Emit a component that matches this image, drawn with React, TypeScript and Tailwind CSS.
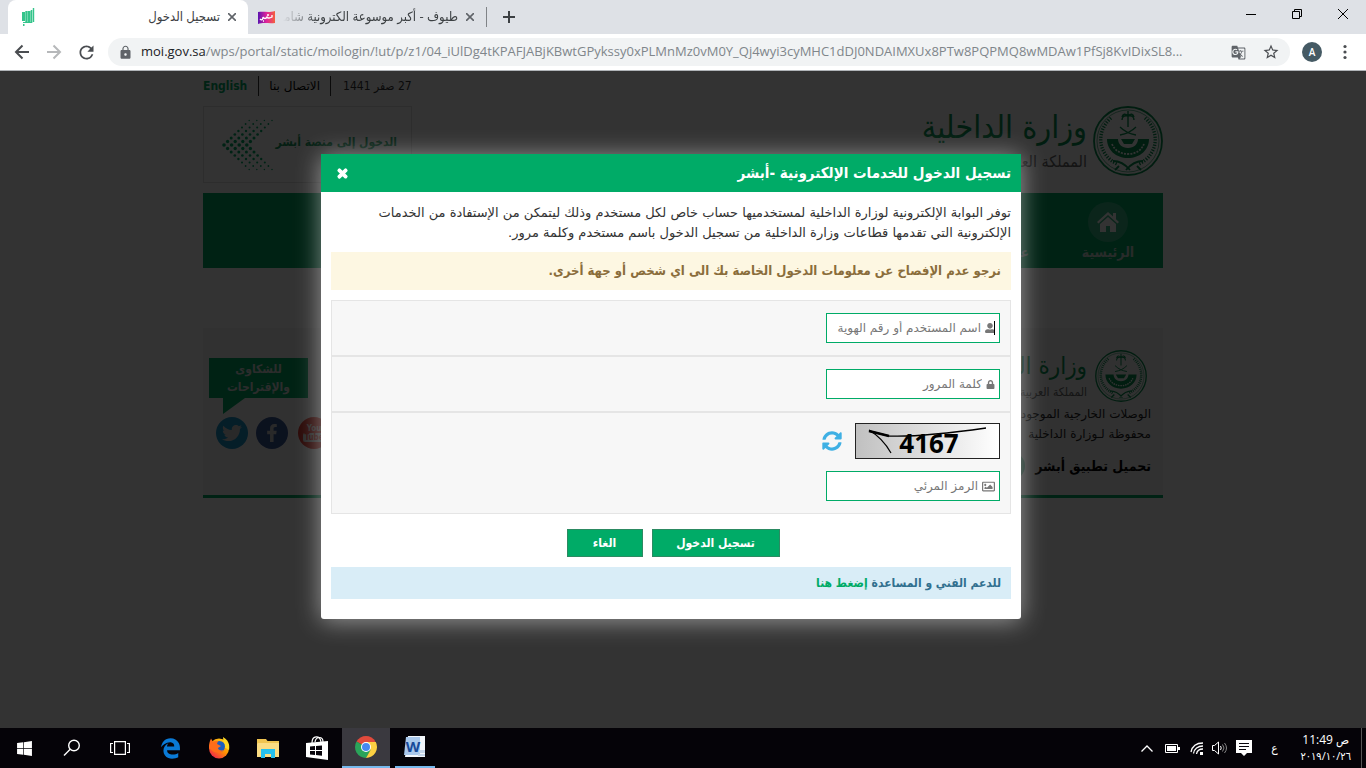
import React from 'react';
import {
  FaEdgeLegacy,
  FaFacebookF,
  FaLock,
  FaRegImage,
  FaSyncAlt,
  FaTimes,
  FaTwitter,
  FaUserAlt,
  FaWindows,
} from 'react-icons/fa';
import { MdGTranslate, MdLock, MdRefresh, MdStarBorder } from 'react-icons/md';

const dotRows = [-7, -6, -5, -4, -3, -2, -1, 0, 1, 2, 3, 4, 5, 6, 7];

// Dotted arrow next to the Absher link
const DottedArrow: React.FC = () => (
  <svg width="54" height="52" viewBox="0 0 54 52" className="shrink-0" aria-hidden="true">
    {dotRows.map((row) =>
      [0, 1, 2, 3].map((col) => (
        <circle
          key={`${row}-${col}`}
          cx={3 + Math.abs(row) * 3.6 + col * 7.6}
          cy={26 + row * 3.5}
          r={1.8 - Math.abs(row) * 0.15}
          fill="#00ab67"
        />
      )),
    )}
  </svg>
);

// Ministry emblem: ring, palm over crossed swords, banner and wreath
const Emblem: React.FC<{ className: string }> = ({ className }) => (
  <svg className={className} viewBox="0 0 70 70" fill="none" stroke="#088f50" aria-hidden="true">
    <circle cx="35" cy="35" r="34" strokeWidth="1.8" />
    <circle cx="35" cy="35" r="31" strokeWidth="0.6" />
    <path d="M35 21V9M35 10c-3-3-5-2-6 1M35 10c3-3 5-2 6 1M35 10c-4-1-6 1-6 4M35 10c4-1 6 1 6 4M35 9v-4" strokeWidth="1.4" />
    <path d="M27 29c6-1 11-3 16-8M43 29c-6-1-11-3-16-8" strokeWidth="1.3" />
    <path d="M14 33h11c0 5 4 9 10 9s10-4 10-9h11c0 11-9 19-21 19S14 44 14 33z" fill="#088f50" stroke="none" />
    <path d="M28 33h14l-3 5h-8z" fill="#088f50" stroke="none" />
    <path d="M19 38c3 7 9 10 16 10s13-3 16-10" stroke="#fff" strokeWidth="1.8" strokeDasharray="2 1.2" />
    <path d="M18 12C3 25 4 48 24 58M52 12c15 13 14 36-6 46" strokeWidth="3.4" strokeDasharray="1.2 1.5" />
    <path d="M20 55c6 0 12 3 17 9M50 55c-6 0-12 3-17 9M26 60l-4 4M44 60l4 4" strokeWidth="1.8" />
  </svg>
);

const BrowserChrome: React.FC = () => (
  <header className="bg-[#dee1e6] font-['Open_Sans','DejaVu_Sans_Condensed',sans-serif]">
    <div className="flex h-[34px] items-stretch pl-2">
      <div className="flex w-[240px] items-center rounded-t-lg bg-white pr-2.5 pl-3.5">
        <svg width="13" height="18" viewBox="0 0 13 18" fill="#35c48b" aria-hidden="true">
          <path d="M0 4h3v9H0zM3.300 3h2.400v11H3.300zM6 3h2.400v11H6zM8.700 2h1.600v13H8.700zM10.800 0h1.400v14h-1.400zM1 14h8v1H1zM1 16h1.500v2H1z" />
        </svg>
        <span dir="rtl" className="flex-1 text-[13px] text-[#3c4043]">
          تسجيل الدخول
        </span>
        <button aria-label="Close tab" className="ml-1.5 flex w-3 justify-center">
          <svg width="8" height="8" viewBox="0 0 8 8" stroke="#5f6368" strokeWidth="1.600">
            <path d="M0 0l8 8M8 0L0 8" />
          </svg>
        </button>
      </div>
      <div className="flex w-[238px] items-center pr-2.5 pl-2.5">
        <svg width="17" height="13" viewBox="0 0 17 13" aria-hidden="true">
          <defs>
            <linearGradient id="tayouf" x1="0" x2="1">
              <stop offset="0" stopColor="#5a12b0" />
              <stop offset="0.500" stopColor="#e0249a" />
              <stop offset="1" stopColor="#f4603c" />
            </linearGradient>
          </defs>
          <path d="M0 1c6-1 10 1 17-1v12c-6 1-11-1-17 1z" fill="url(#tayouf)" />
          <path d="M2 8c2 2 3 0 3-2 1 2 3 2 4 0 1 2 3 1 5 0V4M5 10h1M9 4h2" fill="none" stroke="#fff" strokeWidth="1.300" />
        </svg>
        <span
          dir="rtl"
          className="ml-2 flex-1 overflow-hidden mask-l-from-80% text-[13px] whitespace-nowrap text-[#3c4043]"
        >
          طيوف - أكبر موسوعة الكترونية شاملة
        </span>
        <button aria-label="Close tab" className="ml-1.5 flex w-3 justify-center">
          <svg width="8" height="8" viewBox="0 0 8 8" stroke="#5f6368" strokeWidth="1.600">
            <path d="M0 0l8 8M8 0L0 8" />
          </svg>
        </button>
      </div>
      <div className="my-auto h-5 w-px bg-[#808387]" />
      <button aria-label="New tab" className="ml-4 flex items-center">
        <svg width="12" height="12" viewBox="0 0 12 12" stroke="#3c4043" strokeWidth="2">
          <path d="M6 0v12M0 6h12" />
        </svg>
      </button>
      <div className="ml-auto flex items-start pt-2">
        <button aria-label="Minimize" className="flex w-[46px] justify-center">
          <svg width="12" height="12" viewBox="0 0 12 12" stroke="#000">
            <path d="M1 6.500h10" />
          </svg>
        </button>
        <button aria-label="Restore" className="flex w-[46px] justify-center">
          <svg width="12" height="12" viewBox="0 0 12 12" stroke="#000" fill="none">
            <path d="M1.500 3.500h7v7h-7zM3.500 3.500v-2h7v7h-2" />
          </svg>
        </button>
        <button aria-label="Close window" className="flex w-[46px] justify-center">
          <svg width="12" height="12" viewBox="0 0 12 12" stroke="#000">
            <path d="M1 1l10 10M11 1L1 11" />
          </svg>
        </button>
      </div>
    </div>
    <div className="flex h-[37px] items-center border-b border-[#b0b4b8] bg-white pr-[18px]">
      <button aria-label="Back" className="ml-[14px] flex w-4 justify-center">
        <svg width="16" height="16" viewBox="0 0 16 16" stroke="#4a4d51" strokeWidth="2" fill="none">
          <path d="M15 8H2M8.500 1.500L2 8l6.500 6.500" />
        </svg>
      </button>
      <button aria-label="Forward" className="ml-4 flex w-4 justify-center">
        <svg width="16" height="16" viewBox="0 0 16 16" stroke="#b6b8ba" strokeWidth="2" fill="none">
          <path d="M1 8h13M7.500 1.500L14 8l-6.500 6.500" />
        </svg>
      </button>
      <button aria-label="Reload" className="ml-3 flex w-6 justify-center text-[#4a4d51]">
        <MdRefresh size={21} />
      </button>
      <div className="ml-2.5 flex h-7 min-w-0 flex-1 items-center rounded-full bg-[#f1f3f4] pr-2.5 pl-2.5">
        <MdLock size={15} className="shrink-0 text-[#5f6368]" />
        <div className="ml-2 min-w-0 flex-1 truncate text-[13px] text-[#80868b]">
          <span className="text-[#202124]">moi.gov.sa</span>
          /wps/portal/static/moilogin/!ut/p/z1/04_iUlDg4tKPAFJABjKBwtGPykssy0xPLMnMz0vM0Y_Qj4wyi3cyMHC1dDJ0NDAIMXUx8PTw8PQPMQ8wMDAw1PfSj8KvIDixSL8...
        </div>
        <button aria-label="Translate" className="ml-4 text-[#5f6368]">
          <MdGTranslate size={15} />
        </button>
        <button aria-label="Bookmark" className="ml-4 text-[#4a4d51]">
          <MdStarBorder size={18} />
        </button>
      </div>
      <button className="ml-3 h-5 w-5 rounded-full bg-[#455a64] text-[10px] font-semibold text-white">A</button>
      <button aria-label="Menu" className="ml-5">
        <svg width="6" height="16" viewBox="0 0 6 16" fill="#4a4d51">
          <circle cx="3" cy="2.500" r="1.600" />
          <circle cx="3" cy="8" r="1.600" />
          <circle cx="3" cy="13.500" r="1.600" />
        </svg>
      </button>
    </div>
  </header>
);

const SitePage: React.FC = () => (
  <div dir="rtl" className="mx-auto max-w-[960px]">
    <div className="flex h-[35px] items-center justify-end pb-1.5 text-xs text-[#333]">
      <span className="px-3">27 صفر 1441</span>
      <a href="#contact" className="border-x border-[#333] px-[10px] font-['DejaVu_Sans',sans-serif] leading-5 text-black">
        الاتصال بنا
      </a>
      <a href="#english" className="pr-[11px] font-bold text-[#00ab67]">
        English
      </a>
    </div>

    <div className="flex h-[77px] justify-between">
      <div className="flex gap-1.5">
        <Emblem className="h-[70px] w-[70px]" />
        <div>
          <div className="text-[32px] leading-[42px] whitespace-nowrap text-[#088f50]">وزارة الداخلية</div>
          <div className="text-base leading-7 whitespace-nowrap text-[#666]">المملكة العربية</div>
        </div>
      </div>
      <a href="#absher" className="flex w-[209px] items-center border border-[#e0e0e0] pr-3.5 text-xs font-bold text-[#1a9a62]">
        <span className="pb-1.5 whitespace-nowrap">الدخول إلى منصة أبشر</span>
        <DottedArrow />
      </a>
    </div>

    <nav className="mt-2.5 flex h-[75px] bg-[#00ab67] text-sm font-bold text-[#c8d8d0]">
      <a href="#home" className="flex w-[110px] flex-col items-center pt-[9px]">
        <span className="flex h-10 w-10 items-center justify-center rounded-full bg-[#3ab886]">
          <svg width="24" height="22" viewBox="0 0 24 22" fill="#fff" aria-hidden="true">
            <path d="M12 1L1 11l1.500 1.500L12 4l9.500 8.500L23 11l-3-2.700V2h-3v3.500zM4 13v8h6v-6h4v6h6v-8l-8-7z" />
          </svg>
        </span>
        <span>الرئيسية</span>
      </a>
      <a href="#about" className="pt-[49px] pr-6">
        عن الوزارة
      </a>
    </nav>

    <footer className="mt-[60px] flex h-[170px] justify-between border-b-[3px] border-[#00ab67] bg-[#f5f5f5] pr-3">
      <div className="pt-[22px]">
        <div className="flex gap-2 pr-1">
          <Emblem className="h-[52px] w-[52px]" />
          <div>
            <div className="text-2xl leading-8 whitespace-nowrap text-[#088f50]">وزارة الداخلية</div>
            <div className="text-xs leading-5 whitespace-nowrap text-[#666]">المملكة العربية السعودية</div>
          </div>
        </div>
        <p className="mt-0.5 font-['DejaVu_Sans',sans-serif] text-xs leading-5 text-[#222]">
          الوصلات الخارجية الموجودة
          <br />
          محفوظة لـوزارة الداخلية
        </p>
        <div className="mt-2 flex items-center gap-2.5 text-sm leading-6 font-bold text-black">
          تحميل تطبيق أبشر
          <span className="h-7 w-7 rounded-full bg-[#5fc49b]" />
        </div>
      </div>

      <div className="w-[121px] pt-[30px] pl-1.5">
        <a
          href="#feedback"
          className="relative mr-4 flex h-10 flex-col bg-[#00ab67] pt-0.5 text-center text-xs leading-[18px] font-bold text-[#ddd]"
        >
          <span>للشكاوى</span>
          <span>والإقتراحات</span>
          <svg className="absolute top-10 left-3.5" width="22" height="16" viewBox="0 0 22 16" fill="#00ab67">
            <path d="M0 0h22L0 16z" />
          </svg>
        </a>
        <div dir="ltr" className="mt-[19px] ml-[7px] flex gap-2 text-[#ccc]">
          <a href="#twitter" aria-label="Twitter" className="flex h-8 w-8 shrink-0 items-center justify-center rounded-full bg-[#1b95c9]">
            <FaTwitter size={20} />
          </a>
          <a href="#facebook" aria-label="Facebook" className="flex h-8 w-8 shrink-0 items-center justify-center rounded-full bg-[#3b5998]">
            <FaFacebookF size={18} />
          </a>
          <a
            href="#youtube"
            className="ml-0.5 flex h-8 w-8 shrink-0 flex-col items-center justify-center rounded-full bg-[#d8352c] text-[8px] leading-[9px] font-bold"
          >
            You
            <span className="rounded-xs bg-[#ccc] px-px text-[#d8352c]">Tube</span>
          </a>
        </div>
      </div>
    </footer>
  </div>
);

const fieldBox = 'relative flex h-[30px] w-[174px] items-center gap-1 border border-[#00ab67] bg-white px-1 text-[#777]';
const fieldInput =
  "min-w-0 flex-1 bg-transparent font-['DejaVu_Sans',sans-serif] text-xs outline-none placeholder:text-[#777]";
const greenButton = 'h-7 border border-[#2c8a62] bg-[#00ab67] text-xs font-bold text-white';

const LoginDialog: React.FC = () => (
  <div
    dir="rtl"
    role="dialog"
    aria-label="تسجيل الدخول"
    className="w-[700px] rounded-b-[3px] bg-white pb-5 shadow-[0_2px_24px_rgba(255,255,255,0.500)]"
  >
    <div className="flex h-[38px] items-center justify-between bg-[#00ab67] pr-2.5 pl-[15px] text-white">
      <h1 className="text-[15px] font-bold">تسجيل الدخول للخدمات الإلكترونية -أبشر</h1>
      <button aria-label="إغلاق">
        <FaTimes size={13} stroke="currentColor" strokeWidth={50} />
      </button>
    </div>

    <div className="px-2.5 pt-[11px]">
      <p className="font-['DejaVu_Sans',sans-serif] text-[13px] leading-5 text-[#333]">
        توفر البوابة الإلكترونية لوزارة الداخلية لمستخدميها حساب خاص لكل مستخدم وذلك ليتمكن من الإستفادة من الخدمات
        <br />
        الإلكترونية التي تقدمها قطاعات وزارة الداخلية من تسجيل الدخول باسم مستخدم وكلمة مرور.
      </p>
      <div className="mt-[9px] flex h-[38px] items-center bg-[#fdf7e2] px-2.5 text-[13px] font-bold text-[#8a6d3b]">
        نرجو عدم الإفصاح عن معلومات الدخول الخاصة بك الى اي شخص أو جهة أخرى.
      </div>

      <form className="mt-2.5" onSubmit={(e) => e.preventDefault()}>
        <div className="border border-[#e5e5e5] bg-[#f7f7f7] px-2.5 py-3">
          <label className={fieldBox}>
            <FaUserAlt size={10} />
            <input className={fieldInput} aria-label="اسم المستخدم" placeholder="اسم المستخدم أو رقم الهوية" />
            <span className="absolute right-1 h-3.5 w-px bg-black" />
          </label>
        </div>
        <div className="border border-[#e5e5e5] bg-[#f7f7f7] px-2.5 py-3">
          <label className={fieldBox}>
            <FaLock size={9} />
            <input className={fieldInput} type="password" aria-label="كلمة المرور" placeholder="كلمة المرور" />
          </label>
        </div>
        <div className="border border-[#e5e5e5] bg-[#f7f7f7] px-2.5 pt-2.5 pb-3">
          <div className="mb-3 flex items-center gap-[13px]">
            <svg width="145" height="36" viewBox="0 0 145 36">
              <defs>
                <linearGradient id="captcha" x1="0" x2="1">
                  <stop offset="0" stopColor="#c0c0c0" />
                  <stop offset="1" stopColor="#fff" />
                </linearGradient>
              </defs>
              <rect x="0.500" y="0.500" width="144" height="35" fill="url(#captcha)" stroke="#222" />
              <path d="M14 8l20 5c25 1 55-2 97-8" fill="none" stroke="#000" strokeWidth="1.400" />
              <path d="M14 8l20 5" stroke="#000" strokeWidth="2.400" />
              <path d="M14 7c10 6 17 14 22 23" fill="none" stroke="#000" strokeWidth="1.200" />
              <text
                x="74"
                y="30"
                direction="ltr"
                textAnchor="middle"
                fontFamily="Open Sans, sans-serif"
                fontWeight="700"
                fontSize="26"
              >
                4167
              </text>
            </svg>
            <button type="button" aria-label="تحديث الرمز" className="text-[#3fb0e4]">
              <FaSyncAlt size={20} />
            </button>
          </div>
          <label className={fieldBox}>
            <FaRegImage size={13} />
            <input className={fieldInput} aria-label="الرمز المرئي" placeholder="الرمز المرئي" />
          </label>
        </div>
        <div className="mt-[15px] mb-2.5 flex justify-center gap-[9px] pl-1">
          <button className={`${greenButton} w-32`}>تسجيل الدخول</button>
          <button type="button" className={`${greenButton} w-[76px]`}>
            الغاء
          </button>
        </div>
      </form>

      <div className="flex h-8 items-center gap-1 bg-[#d9edf7] px-2.5 text-xs font-bold text-[#31708f]">
        للدعم الفني و المساعدة
        <a href="#help" className="text-[#00ab67]">
          إضغط هنا
        </a>
      </div>
    </div>
  </div>
);

const taskButton = 'flex h-10 w-12 items-center justify-center';

const Taskbar: React.FC = () => (
  <footer className="flex h-10 items-center bg-[#050308] font-['Open_Sans','DejaVu_Sans_Condensed',sans-serif] text-white">
    <button aria-label="Start" className={taskButton}>
      <FaWindows size={17} />
    </button>
    <button aria-label="Search" className={taskButton}>
      <svg width="18" height="18" viewBox="0 0 18 18" fill="none" stroke="#fff" strokeWidth="1.400">
        <circle cx="11" cy="6.500" r="5.300" />
        <path d="M7.200 10.300L1 16.500" />
      </svg>
    </button>
    <button aria-label="Task view" className={taskButton}>
      <svg width="20" height="14" viewBox="0 0 20 14" fill="none" stroke="#fff" strokeWidth="1.200">
        <path d="M4.600.6h10.800v12.800H4.600zM3 2.500H.6v9H3M17 2.500h2.400v9H17" />
      </svg>
    </button>
    <div className="ml-0.5 flex gap-px">
      <button aria-label="Edge" className={`${taskButton} text-[#0a7ad6]`}>
        <FaEdgeLegacy size={21} />
      </button>
      <button aria-label="Firefox" className={taskButton}>
        <svg width="22" height="22" viewBox="0 0 22 22">
          <defs>
            <linearGradient id="fox" x1="1" x2="0.200" y2="1">
              <stop offset="0" stopColor="#ffe226" />
              <stop offset="0.500" stopColor="#ff9500" />
              <stop offset="1" stopColor="#f0204e" />
            </linearGradient>
          </defs>
          <circle cx="11" cy="11.500" r="10" fill="url(#fox)" />
          <path d="M15 0c5 3 7 7 6 13l-5-3z" fill="#ffd824" />
          <circle cx="11.500" cy="9.500" r="5.500" fill="#1c5fc0" />
          <path d="M3 1.500C2 4 1 6 1 11l5 4 6 1 4-3c-3 1-6 0-6-2l3-2-4-2 1-3c-3 0-4 0-5 1z" fill="#ff6d1a" />
        </svg>
      </button>
      <button aria-label="File Explorer" className={taskButton}>
        <svg width="22" height="19" viewBox="0 0 22 19">
          <path d="M0 0h9l1.500 2H22v16H0z" fill="#f0c451" />
          <path d="M1 4h21v14H0V5z" fill="#fbdc83" />
          <path d="M4 10h14v9h-4v-4H8v4H4z" fill="#25c0ee" />
        </svg>
      </button>
      <button aria-label="Store" className={taskButton}>
        <svg width="22" height="24" viewBox="0 0 22 24">
          <path d="M0 7l22-2v19L0 21z" fill="#fff" />
          <path d="M6 7c0-8 8-8 9-1M9 6c1-6 8-6 8 0" fill="none" stroke="#fff" strokeWidth="1.200" />
          <path d="M4 10.500l5-.5v4H4zM10 10l6-.5V14h-6zM4 15h5v4l-5-.5zM10 15h6v4.700l-6-.7z" fill="#08050c" />
        </svg>
      </button>
      <button aria-label="Chrome" className={`${taskButton} border-b-2 border-[#76b9ed] bg-[#3a393f]`}>
        <svg width="22" height="22" viewBox="0 0 22 22">
          <path d="M11 11L1.500 5.500A11 11 0 0 1 20.500 5.500z" fill="#e04a3c" />
          <path d="M11 11L1.500 5.500A11 11 0 0 0 11 22l5-8z" fill="#2aa45a" />
          <path d="M11 6h9.800A11 11 0 0 1 11 22l4.500-8z" fill="#fcd042" />
          <circle cx="11" cy="11" r="5" fill="#fff" />
          <circle cx="11" cy="11" r="4" fill="#4688f1" />
        </svg>
      </button>
      <button aria-label="Word" className={taskButton}>
        <span className="flex h-10 w-10 items-center justify-center border-b-2 border-[#76b9ed]">
          <svg width="23" height="22" viewBox="0 0 23 22">
            <path d="M4 0h17v21H1z" fill="#f3f7fc" />
            <path d="M2 1h14v18H0z" fill="#a9c8ec" />
            <path d="M15 14h6v3h-6zM14 18h7v2h-7z" fill="#c5d6ea" />
            <text x="9" y="16" textAnchor="middle" fontSize="15" fontWeight="700" fill="#174a9a">
              W
            </text>
          </svg>
        </span>
      </button>
    </div>

    <div className="ml-auto flex items-center">
      <svg width="12" height="7" viewBox="0 0 12 7" fill="none" stroke="#fff" strokeWidth="1.300">
        <path d="M.5 6.500L6 1l5.500 5.500" />
      </svg>
      <svg className="ml-3" width="15" height="9" viewBox="0 0 15 9">
        <path d="M.5.500h12v8H.5z" fill="none" stroke="#fff" />
        <path d="M2 2h9v5H2zM13 3h2v3h-2z" fill="#fff" />
      </svg>
      <svg className="ml-2.5" width="14" height="13" viewBox="0 0 14 13" fill="none" stroke="#fff" strokeWidth="1.300">
        <path d="M1 10C2 5 6 1 13 1M3.500 11.500C4 7 8 4 13 4M6.500 12C7 9 9 7 13 7" />
        <path d="M10 10h3v3h-3z" fill="#fff" stroke="none" />
      </svg>
      <svg className="ml-2" width="16" height="14" viewBox="0 0 16 14" fill="none" stroke="#fff">
        <path d="M.5 4.500h2L6.500 1v12l-4-3.500h-2zM8.500 5q1.500 2 0 4" />
        <path d="M10.500 3.500q3 3.500 0 7M12.500 2q4 5 0 10" stroke="#888" />
      </svg>
      <svg className="ml-2" width="16" height="16" viewBox="0 0 16 16">
        <path d="M0 0h16v13h-5l-3 3-3-3H0z" fill="#fff" />
        <path d="M3 3.500h10M3 6.500h10M3 9.500h7" stroke="#08050c" />
      </svg>
      <span className="ml-3.5 w-4 text-center text-xs">ع</span>
      <div className="ml-[18px] text-center text-xs leading-4">
        <div>11:49 ص</div>
        <div className="text-[11px] leading-4">٢٠١٩/١٠/٢٦</div>
      </div>
      <div className="mr-1 ml-2.5 h-10 w-px bg-[#555]" />
    </div>
  </footer>
);

const App: React.FC = () => {
  return (
    <div className="flex min-h-screen flex-col bg-white font-['DejaVu_Sans_Condensed','DejaVu_Sans',sans-serif]">
      <BrowserChrome />
      <main className="relative flex-1 overflow-hidden">
        <SitePage />
        {/* Dimmed backdrop with the login dialog */}
        <div className="absolute inset-0 flex items-start justify-center bg-black/80 pt-[83px] pr-6">
          <LoginDialog />
        </div>
      </main>
      <Taskbar />
    </div>
  );
};

export default App;
